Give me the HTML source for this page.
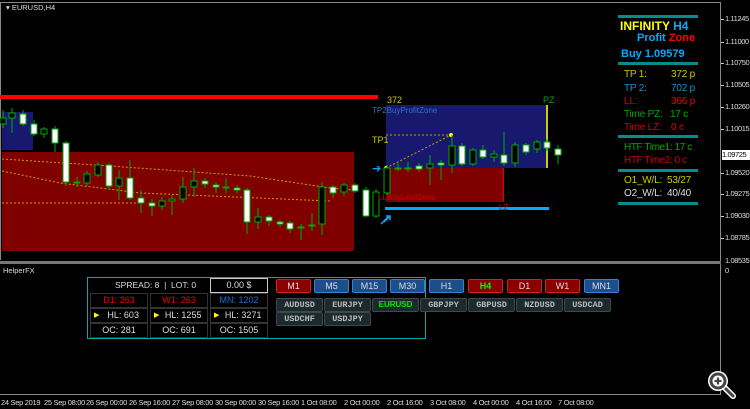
<!DOCTYPE html>
<html><head><style>
body{margin:0;background:#000;width:750px;height:409px;overflow:hidden;position:relative;font-family:"Liberation Sans",sans-serif}
.a{position:absolute;white-space:nowrap}
.ax{position:absolute;left:725px;font-size:7.5px;color:#ddd;letter-spacing:-0.4px}
.tk{position:absolute;left:721px;width:3px;height:1px;background:#ccc}
.t{position:absolute;top:398px;font-size:7.5px;color:#ddd;letter-spacing:-0.3px}
.tf{position:absolute;top:279px;width:33px;height:12px;border:1px solid;border-radius:2px;font-size:9px;color:#ddd;text-align:center;line-height:12px}
.r{background:#8a0000;border-color:#d02020}
.b{background:#1c4e8c;border-color:#3a7fd0}
.p{position:absolute;width:45px;height:12px;background:#1c2a2e;border:1px solid #3a4a4e;border-radius:2px;font-family:"Liberation Mono",monospace;font-weight:bold;font-size:8.5px;color:#bbb;text-align:center;line-height:12px}
.c{position:absolute;width:56px;height:13px;border:1px solid #333;font-size:9px;color:#ddd;text-align:center;line-height:13px}
.pl{position:absolute;font-size:10px;letter-spacing:-0.2px}
.bar{position:absolute;left:618px;width:80px;height:3px;background:#0a8a8a}
</style></head><body>
<div class="a" style="left:0;top:2px;width:720px;height:1px;background:#888"></div>
<div class="a" style="left:0;top:2px;width:1px;height:258px;background:#888"></div>
<div class="a" style="left:720px;top:2px;width:1px;height:393px;background:#888"></div>
<div class="a" style="left:0;top:261px;width:721px;height:3px;background:#777"></div>
<div class="a" style="left:0;top:394px;width:721px;height:1px;background:#888"></div>
<div class="a" style="left:6px;top:3px;font-size:7.5px;color:#ddd">▾ EURUSD,H4</div>

<svg class="a" style="left:0;top:0" width="720" height="262">
<rect x="2" y="112" width="31" height="38" fill="#18186e"/>
<rect x="2" y="152" width="352" height="99" fill="#800000"/>
<rect x="0" y="95" width="378" height="4" fill="#f00"/>
<rect x="386" y="105" width="161" height="63" fill="#18186e"/>
<rect x="386" y="168" width="118" height="34" fill="#800000"/>
<rect x="503" y="168" width="1" height="34" fill="#d00"/>
<rect x="546" y="105" width="2" height="63" fill="#cc0"/>
<rect x="385" y="207" width="164" height="3" fill="#0af"/>
<g stroke="#c8a000" stroke-width="1" stroke-dasharray="2,2" fill="none">
<path d="M2 159 L110 166 L250 176 L330 188 L354 190"/>
<path d="M2 171 L60 183 L140 193 L330 201"/>
<path d="M2 203 L140 203"/>
<path d="M386 135 L451 135"/>
<path d="M386 168 L451 135"/>
</g>
<circle cx="451" cy="135" r="2" fill="#ff0"/><circle cx="386" cy="168" r="2" fill="#ff0"/>
<g stroke="#0a0" stroke-width="1">
<line x1="3" y1="110" x2="3" y2="128"/><line x1="12" y1="108" x2="12" y2="133"/><line x1="23" y1="110" x2="23" y2="126"/><line x1="34" y1="120" x2="34" y2="136"/><line x1="44" y1="127" x2="44" y2="138"/><line x1="55" y1="126" x2="55" y2="152"/><line x1="66" y1="141" x2="66" y2="186"/><line x1="77" y1="177" x2="77" y2="187"/><line x1="87" y1="171" x2="87" y2="186"/><line x1="98" y1="162" x2="98" y2="177"/><line x1="109" y1="163" x2="109" y2="190"/><line x1="119" y1="170" x2="119" y2="200"/><line x1="130" y1="160" x2="130" y2="200"/><line x1="141" y1="190" x2="141" y2="213"/><line x1="152" y1="199" x2="152" y2="216"/><line x1="162" y1="197" x2="162" y2="210"/><line x1="172" y1="195" x2="172" y2="215"/><line x1="183" y1="177" x2="183" y2="203"/><line x1="194" y1="168" x2="194" y2="197"/><line x1="205" y1="178" x2="205" y2="188"/><line x1="216" y1="182" x2="216" y2="193"/><line x1="226" y1="178" x2="226" y2="193"/><line x1="237" y1="185" x2="237" y2="193"/><line x1="247" y1="188" x2="247" y2="234"/><line x1="258" y1="208" x2="258" y2="229"/><line x1="269" y1="215" x2="269" y2="226"/><line x1="280" y1="220" x2="280" y2="227"/><line x1="290" y1="221" x2="290" y2="233"/><line x1="301" y1="224" x2="301" y2="240"/><line x1="312" y1="213" x2="312" y2="231"/><line x1="322" y1="182" x2="322" y2="235"/><line x1="333" y1="185" x2="333" y2="198"/><line x1="344" y1="183" x2="344" y2="196"/><line x1="355" y1="183" x2="355" y2="193"/><line x1="366" y1="187" x2="366" y2="217"/><line x1="376" y1="189" x2="376" y2="218"/><line x1="387" y1="165" x2="387" y2="195"/><line x1="398" y1="163" x2="398" y2="171"/><line x1="408" y1="162" x2="408" y2="172"/><line x1="419" y1="163" x2="419" y2="172"/><line x1="430" y1="155" x2="430" y2="185"/><line x1="441" y1="160" x2="441" y2="180"/><line x1="452" y1="135" x2="452" y2="173"/><line x1="462" y1="143" x2="462" y2="166"/><line x1="473" y1="148" x2="473" y2="166"/><line x1="483" y1="145" x2="483" y2="159"/><line x1="494" y1="150" x2="494" y2="162"/><line x1="504" y1="132" x2="504" y2="166"/><line x1="515" y1="142" x2="515" y2="167"/><line x1="526" y1="143" x2="526" y2="155"/><line x1="537" y1="140" x2="537" y2="153"/><line x1="547" y1="139" x2="547" y2="151"/><line x1="558" y1="145" x2="558" y2="164"/>
</g>
<g stroke="#0a0" stroke-width="1">
<rect x="0" y="118" width="6" height="6" fill="#000"/><rect x="9" y="113" width="6" height="5" fill="#000"/><rect x="20" y="114" width="6" height="10" fill="#fff"/><rect x="31" y="124" width="6" height="10" fill="#fff"/><rect x="41" y="129" width="6" height="5" fill="#000"/><rect x="52" y="129" width="6" height="14" fill="#fff"/><rect x="63" y="143" width="6" height="39" fill="#fff"/><rect x="74" y="182" width="6" height="1" fill="#0a0"/><rect x="84" y="174" width="6" height="9" fill="#000"/><rect x="95" y="165" width="6" height="10" fill="#000"/><rect x="106" y="165" width="6" height="21" fill="#fff"/><rect x="116" y="178" width="6" height="8" fill="#000"/><rect x="127" y="178" width="6" height="20" fill="#fff"/><rect x="138" y="198" width="6" height="5" fill="#fff"/><rect x="149" y="203" width="6" height="3" fill="#fff"/><rect x="159" y="201" width="6" height="5" fill="#000"/><rect x="169" y="199" width="6" height="2" fill="#000"/><rect x="180" y="187" width="6" height="12" fill="#000"/><rect x="191" y="181" width="6" height="6" fill="#000"/><rect x="202" y="181" width="6" height="3" fill="#fff"/><rect x="213" y="185" width="6" height="2" fill="#fff"/><rect x="223" y="187" width="6" height="1" fill="#0a0"/><rect x="234" y="188" width="6" height="2" fill="#fff"/><rect x="244" y="190" width="6" height="32" fill="#fff"/><rect x="255" y="217" width="6" height="5" fill="#000"/><rect x="266" y="217" width="6" height="4" fill="#fff"/><rect x="277" y="222" width="6" height="2" fill="#fff"/><rect x="287" y="223" width="6" height="6" fill="#fff"/><rect x="298" y="227" width="6" height="1" fill="#0a0"/><rect x="309" y="225" width="6" height="1" fill="#0a0"/><rect x="319" y="187" width="6" height="37" fill="#000"/><rect x="330" y="187" width="6" height="6" fill="#fff"/><rect x="341" y="185" width="6" height="7" fill="#000"/><rect x="352" y="185" width="6" height="6" fill="#fff"/><rect x="363" y="190" width="6" height="26" fill="#fff"/><rect x="373" y="192" width="6" height="24" fill="#000"/><rect x="384" y="168" width="6" height="25" fill="#000"/><rect x="395" y="168" width="6" height="1" fill="#0a0"/><rect x="405" y="168" width="6" height="1" fill="#0a0"/><rect x="416" y="166" width="6" height="3" fill="#fff"/><rect x="427" y="164" width="6" height="4" fill="#000"/><rect x="438" y="163" width="6" height="2" fill="#fff"/><rect x="449" y="146" width="6" height="19" fill="#000"/><rect x="459" y="146" width="6" height="18" fill="#fff"/><rect x="470" y="150" width="6" height="14" fill="#000"/><rect x="480" y="150" width="6" height="7" fill="#fff"/><rect x="491" y="154" width="6" height="3" fill="#000"/><rect x="501" y="155" width="6" height="8" fill="#fff"/><rect x="512" y="145" width="6" height="18" fill="#000"/><rect x="523" y="145" width="6" height="7" fill="#fff"/><rect x="534" y="142" width="6" height="7" fill="#000"/><rect x="544" y="142" width="6" height="6" fill="#fff"/><rect x="555" y="149" width="6" height="6" fill="#fff"/>
</g>
<text x="387" y="103" font-size="9" fill="#cc0" font-family="Liberation Sans">372</text>
<text x="543" y="103" font-size="9" fill="#0a0" font-family="Liberation Sans">PZ</text>
<text x="372" y="113" font-size="8" fill="#2a7ab0" font-family="Liberation Sans">TP2BuyProfitZone</text>
<text x="372" y="143" font-size="9" fill="#cc0" font-family="Liberation Sans">TP1</text>
<text x="378" y="200" font-size="8" fill="#c00" font-family="Liberation Sans">LLBuyLimitZone</text>
<text x="499" y="210" font-size="8" fill="#c00" font-family="Liberation Sans">LZ</text>
<text x="372" y="172" font-size="11" fill="#0af" font-family="DejaVu Sans">➔</text>
<path d="M384 222 l6 -6 M386 216 h4 v4" stroke="#0af" stroke-width="1.5" fill="none"/>
<path d="M381 224 l7 -7" stroke="#0af" stroke-width="1.5"/>
</svg>

<div class="bar" style="top:15px"></div>
<div class="a" style="left:620px;top:19px;font-size:12px;font-weight:bold;color:#ff0">INFINITY <span style="color:#0af">H4</span></div>
<div class="a" style="left:637px;top:32px;font-size:11px;font-weight:bold;color:#0af">Profit <span style="color:#f00">Zone</span></div>
<div class="a" style="left:621px;top:48px;font-size:11px;font-weight:bold;color:#0af">Buy 1.09579</div>
<div class="bar" style="top:62px"></div>
<div class="pl" style="left:624px;top:69px;color:#cc0">TP 1:</div><div class="pl" style="left:671px;top:69px;color:#cc0">372 p</div>
<div class="pl" style="left:624px;top:83px;color:#1a8fd0">TP 2:</div><div class="pl" style="left:671px;top:83px;color:#1a8fd0">702 p</div>
<div class="pl" style="left:624px;top:96px;color:#c00">LL:</div><div class="pl" style="left:671px;top:96px;color:#e00">366 p</div>
<div class="pl" style="left:624px;top:109px;color:#0a0">Time PZ:</div><div class="pl" style="left:670px;top:109px;color:#0a0">17 c</div>
<div class="pl" style="left:624px;top:122px;color:#c00">Time LZ:</div><div class="pl" style="left:671px;top:122px;color:#e00">0 c</div>
<div class="bar" style="top:135px"></div>
<div class="pl" style="left:624px;top:142px;color:#0a0;letter-spacing:-0.4px">HTF Time1: 17 c</div>
<div class="pl" style="left:624px;top:155px;color:#c00;letter-spacing:-0.4px">HTF Time2: 0 c</div>
<div class="bar" style="top:169px"></div>
<div class="pl" style="left:624px;top:175px;color:#cc0">O1_W/L:</div><div class="pl" style="left:667px;top:175px;color:#cc0">53/27</div>
<div class="pl" style="left:624px;top:188px;color:#ddd">O2_W/L:</div><div class="pl" style="left:667px;top:188px;color:#ddd">40/40</div>
<div class="bar" style="top:202px"></div>

<div class="tk" style="top:19px"></div><div class="ax" style="top:14px">1.11245</div>
<div class="tk" style="top:42px"></div><div class="ax" style="top:37px">1.11000</div>
<div class="tk" style="top:63px"></div><div class="ax" style="top:58px">1.10750</div>
<div class="tk" style="top:85px"></div><div class="ax" style="top:80px">1.10505</div>
<div class="tk" style="top:107px"></div><div class="ax" style="top:102px">1.10260</div>
<div class="tk" style="top:129px"></div><div class="ax" style="top:124px">1.10015</div>
<div class="a" style="left:722px;top:150px;width:28px;height:10px;background:#fff;color:#000;font-size:7.5px;line-height:10px;letter-spacing:-0.4px">1.09725</div>
<div class="tk" style="top:173px"></div><div class="ax" style="top:168px">1.09520</div>
<div class="tk" style="top:194px"></div><div class="ax" style="top:189px">1.09275</div>
<div class="tk" style="top:216px"></div><div class="ax" style="top:211px">1.09030</div>
<div class="tk" style="top:238px"></div><div class="ax" style="top:233px">1.08785</div>
<div class="ax" style="top:256px">1.08535</div>
<div class="ax" style="top:266px">0</div>

<div class="a" style="left:3px;top:266px;font-size:7.5px;color:#ddd">HelperFX</div>
<div class="a" style="left:87px;top:277px;width:339px;height:62px;border:1px solid #0aa;box-sizing:border-box"></div>
<div class="a" style="left:115px;top:279px;font-size:8.5px;color:#ddd;line-height:12px">SPREAD: 8 &nbsp;|&nbsp; LOT: 0</div>
<div class="c" style="left:210px;top:278px;border-color:#ccc">0.00 $</div>
<div class="c" style="left:90px;top:293px;color:#e00">D1: 263</div>
<div class="c" style="left:150px;top:293px;color:#e00">W1: 263</div>
<div class="c" style="left:210px;top:293px;color:#1a6fd0">MN: 1202</div>
<div class="c" style="left:90px;top:308px"><span style="color:#ff0;float:left;font-size:7px;margin-left:3px">▶</span>HL: 603</div>
<div class="c" style="left:150px;top:308px"><span style="color:#ff0;float:left;font-size:7px;margin-left:3px">▶</span>HL: 1255</div>
<div class="c" style="left:210px;top:308px"><span style="color:#ff0;float:left;font-size:7px;margin-left:3px">▶</span>HL: 3271</div>
<div class="c" style="left:90px;top:323px">OC: 281</div>
<div class="c" style="left:150px;top:323px">OC: 691</div>
<div class="c" style="left:210px;top:323px">OC: 1505</div>

<div class="tf r" style="left:276px">M1</div>
<div class="tf b" style="left:314px">M5</div>
<div class="tf b" style="left:352px">M15</div>
<div class="tf b" style="left:390px">M30</div>
<div class="tf b" style="left:429px">H1</div>
<div class="tf r" style="left:468px;color:#0f0;font-weight:bold">H4</div>
<div class="tf r" style="left:507px">D1</div>
<div class="tf r" style="left:545px">W1</div>
<div class="tf b" style="left:584px">MN1</div>

<div class="p" style="left:276px;top:298px">AUDUSD</div>
<div class="p" style="left:324px;top:298px">EURJPY</div>
<div class="p" style="left:372px;top:298px;color:#0e0;font-family:'Liberation Sans';font-size:8px">EURUSD</div>
<div class="p" style="left:420px;top:298px">GBPJPY</div>
<div class="p" style="left:468px;top:298px">GBPUSD</div>
<div class="p" style="left:516px;top:298px">NZDUSD</div>
<div class="p" style="left:564px;top:298px">USDCAD</div>
<div class="p" style="left:276px;top:312px">USDCHF</div>
<div class="p" style="left:324px;top:312px">USDJPY</div>

<div class="t" style="left:1px">24 Sep 2019</div>
<div class="t" style="left:44px">25 Sep 08:00</div>
<div class="t" style="left:86px">26 Sep 00:00</div>
<div class="t" style="left:129px">26 Sep 16:00</div>
<div class="t" style="left:172px">27 Sep 08:00</div>
<div class="t" style="left:215px">30 Sep 00:00</div>
<div class="t" style="left:258px">30 Sep 16:00</div>
<div class="t" style="left:301px">1 Oct 08:00</div>
<div class="t" style="left:344px">2 Oct 00:00</div>
<div class="t" style="left:387px">2 Oct 16:00</div>
<div class="t" style="left:430px">3 Oct 08:00</div>
<div class="t" style="left:473px">4 Oct 00:00</div>
<div class="t" style="left:516px">4 Oct 16:00</div>
<div class="t" style="left:558px">7 Oct 08:00</div>

<svg class="a" style="left:705px;top:368px" width="40" height="32">
<line x1="19" y1="19" x2="28" y2="28" stroke="#fff" stroke-width="6" stroke-linecap="round"/>
<line x1="19" y1="19" x2="28" y2="28" stroke="#444" stroke-width="3" stroke-linecap="round"/>
<circle cx="13" cy="13" r="10" fill="#fff"/>
<circle cx="13" cy="13" r="8.5" fill="#444"/>
<circle cx="13" cy="13" r="5.5" fill="#fff"/>
<path d="M13 9.5v7M9.5 13h7" stroke="#444" stroke-width="2.2"/>
</svg>
</body></html>
